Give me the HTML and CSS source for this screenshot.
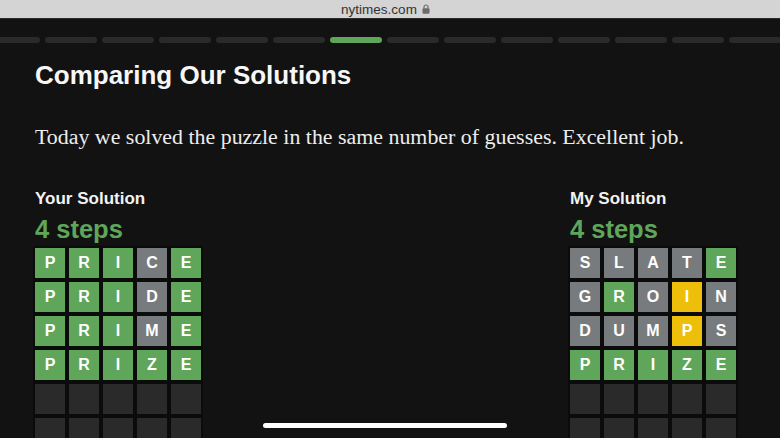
FILE: index.html
```html
<!DOCTYPE html>
<html lang="en">
<head>
<meta charset="utf-8">
<title>Comparing Our Solutions</title>
<link rel="stylesheet" href="styles.css">
</head>
<body>
<div class="urlbar">
  <span class="url">nytimes.com</span>
  <svg class="lock" width="8" height="10" viewBox="0 0 8 10"><path d="M2 4.5V3a2 2 0 0 1 4 0v1.5" fill="none" stroke="#6b6b6b" stroke-width="1.2"/><rect x="0.5" y="4.3" width="7" height="5.4" rx="1" fill="#6b6b6b"/></svg>
</div>
<div class="progress">
  <span class="seg"></span><span class="seg"></span><span class="seg"></span><span class="seg"></span><span class="seg"></span><span class="seg"></span>
  <span class="seg seg-active"></span>
  <span class="seg"></span><span class="seg"></span><span class="seg"></span><span class="seg"></span><span class="seg"></span><span class="seg"></span><span class="seg"></span>
</div>
<main class="content">
  <h1 class="title">Comparing Our Solutions</h1>
  <p class="lead">Today we solved the puzzle in the same number of guesses. Excellent job.</p>
  <div class="solutions">
    <section class="solution">
      <h2 class="label">Your Solution</h2>
      <div class="steps">4 steps</div>
      <div class="board">
        <span class="tile g">P</span><span class="tile g">R</span><span class="tile g">I</span><span class="tile x">C</span><span class="tile g">E</span>
        <span class="tile g">P</span><span class="tile g">R</span><span class="tile g">I</span><span class="tile x">D</span><span class="tile g">E</span>
        <span class="tile g">P</span><span class="tile g">R</span><span class="tile g">I</span><span class="tile x">M</span><span class="tile g">E</span>
        <span class="tile g">P</span><span class="tile g">R</span><span class="tile g">I</span><span class="tile g">Z</span><span class="tile g">E</span>
        <span class="tile e"></span><span class="tile e"></span><span class="tile e"></span><span class="tile e"></span><span class="tile e"></span>
        <span class="tile e"></span><span class="tile e"></span><span class="tile e"></span><span class="tile e"></span><span class="tile e"></span>
      </div>
    </section>
    <section class="solution">
      <h2 class="label">My Solution</h2>
      <div class="steps">4 steps</div>
      <div class="board">
        <span class="tile x">S</span><span class="tile x">L</span><span class="tile x">A</span><span class="tile x">T</span><span class="tile g">E</span>
        <span class="tile x">G</span><span class="tile g">R</span><span class="tile x">O</span><span class="tile y">I</span><span class="tile x">N</span>
        <span class="tile x">D</span><span class="tile x">U</span><span class="tile x">M</span><span class="tile y">P</span><span class="tile x">S</span>
        <span class="tile g">P</span><span class="tile g">R</span><span class="tile g">I</span><span class="tile g">Z</span><span class="tile g">E</span>
        <span class="tile e"></span><span class="tile e"></span><span class="tile e"></span><span class="tile e"></span><span class="tile e"></span>
        <span class="tile e"></span><span class="tile e"></span><span class="tile e"></span><span class="tile e"></span><span class="tile e"></span>
      </div>
    </section>
  </div>
</main>
<div class="home-indicator"></div>
</body>
</html>
```
FILE: styles.css
```css
html, body {
  margin: 0;
  padding: 0;
}
body {
  background: #121212;
  color: #f2f2f2;
  font-family: "Liberation Sans", Arial, sans-serif;
  width: 780px;
  height: 438px;
  overflow: hidden;
  position: relative;
}
.urlbar {
  height: 18px;
  background: #d4d4d4;
  border-bottom: 1px solid #2b2b2b;
  display: flex;
  align-items: center;
  justify-content: center;
  gap: 5px;
  padding-right: 9px;
}
.url {
  font-size: 13.5px;
  color: #333333;
}
.lock {
  display: block;
  margin-top: -1px;
}
.progress {
  display: flex;
  gap: 5px;
  margin-top: 18px;
  margin-left: -12px;
}
.seg {
  flex: 0 0 52px;
  height: 6px;
  border-radius: 3px;
  background: #2a2a2a;
}
.seg-active {
  background: #5fa65a;
}
.content {
  padding: 0 44px 0 35px;
}
.title {
  margin: 16px 0 0;
  font-size: 26px;
  line-height: 32px;
  font-weight: bold;
  color: #f7f7f7;
}
.lead {
  margin: 32px 0 0;
  font-family: "Liberation Serif", "Times New Roman", serif;
  font-size: 21.9px;
  line-height: 28px;
  color: #ededed;
}
.solutions {
  display: flex;
  justify-content: space-between;
  margin-top: 38px;
}
.label {
  margin: 0;
  font-size: 17px;
  line-height: 20px;
  font-weight: bold;
  color: #f2f2f2;
}
.steps {
  margin-top: 5px;
  font-size: 25.5px;
  line-height: 30px;
  font-weight: bold;
  color: #5fa65a;
}
.board {
  margin-top: 4px;
  display: grid;
  grid-template-columns: repeat(5, 30px);
  grid-auto-rows: 30px;
  gap: 4px;
}
.tile {
  display: flex;
  align-items: center;
  justify-content: center;
  font-size: 16px;
  font-weight: bold;
  color: #ffffff;
  box-shadow: 0 0 0 2px #0b0b0b;
}
.tile.g { background: #5fa65a; }
.tile.x { background: #787b7e; }
.tile.y { background: #eebf0a; }
.tile.e { background: #2a2a2a; }
.home-indicator {
  position: absolute;
  left: 263px;
  top: 423px;
  width: 244px;
  height: 5px;
  border-radius: 3px;
  background: #ffffff;
}
```
